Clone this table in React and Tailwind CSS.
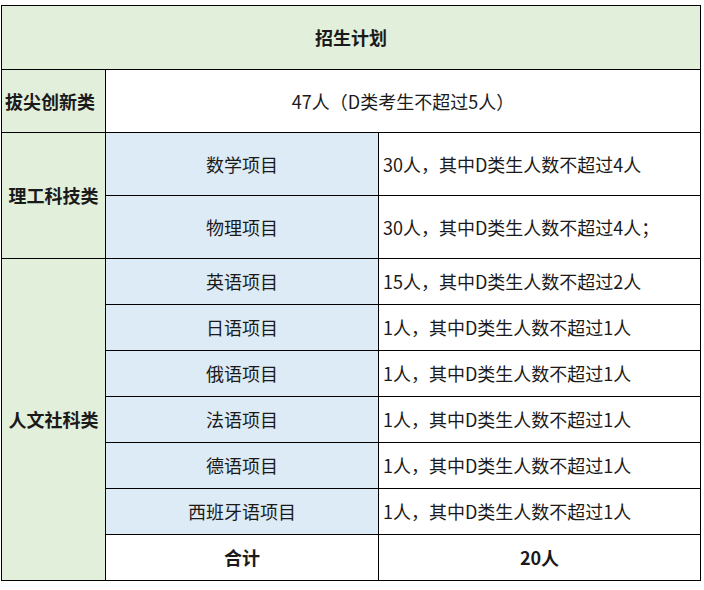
const rows = [
  ["英语项目", "15人，其中D类生人数不超过2人"],
  ["日语项目", "1人，其中D类生人数不超过1人"],
  ["俄语项目", "1人，其中D类生人数不超过1人"],
  ["法语项目", "1人，其中D类生人数不超过1人"],
  ["德语项目", "1人，其中D类生人数不超过1人"],
  ["西班牙语项目", "1人，其中D类生人数不超过1人"],
];

const App = () => {
  return (
    <div
      className="w-[704px] h-[590px] bg-white pt-[5px] pl-[1px] text-[18px] text-[#1a1a1a]"
      style={{ fontFamily: '"Noto Sans CJK SC", "Noto Sans", sans-serif' }}
    >
      <table className="border-collapse table-fixed w-[699px]">
        <colgroup>
          <col className="w-[104px]" />
          <col className="w-[273px]" />
          <col className="w-[322px]" />
        </colgroup>
        <tbody>
          <tr className="h-[64px]">
            <td colSpan={3} className="border border-black bg-[#e2efda] text-center font-bold">
              招生计划
            </td>
          </tr>
          <tr className="h-[63px]">
            <td className="border border-black bg-[#e2efda] font-bold pl-[3px]">拔尖创新类</td>
            <td colSpan={2} className="border border-black text-center">
              47人（D类考生不超过5人）
            </td>
          </tr>
          <tr className="h-[63px]">
            <td rowSpan={2} className="border border-black bg-[#e2efda] font-bold text-center">
              理工科技类
            </td>
            <td className="border border-black bg-[#ddebf7] text-center">数学项目</td>
            <td className="border border-black pl-[4px]">30人，其中D类生人数不超过4人</td>
          </tr>
          <tr className="h-[63px]">
            <td className="border border-black bg-[#ddebf7] text-center">物理项目</td>
            <td className="border border-black pl-[4px]">30人，其中D类生人数不超过4人；</td>
          </tr>
          {rows.map((r, i) => (
            <tr key={r[0]} className="h-[46px]">
              {i === 0 && (
                <td rowSpan={7} className="border border-black bg-[#e2efda] font-bold text-center">
                  人文社科类
                </td>
              )}
              <td className="border border-black bg-[#ddebf7] text-center">{r[0]}</td>
              <td className="border border-black pl-[4px]">{r[1]}</td>
            </tr>
          ))}
          <tr className="h-[46px]">
            <td className="border border-black text-center font-bold">合计</td>
            <td className="border border-black text-center font-bold">20人</td>
          </tr>
        </tbody>
      </table>
    </div>
  );
};

export default App;
